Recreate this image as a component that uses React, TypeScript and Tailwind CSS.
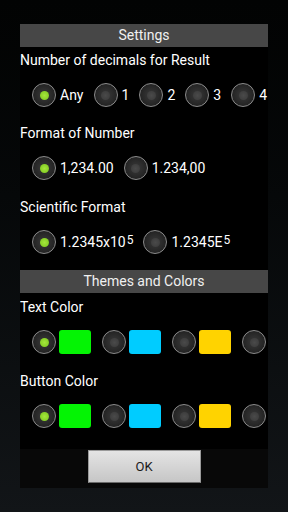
import React, { FC, ReactNode } from "react";

const font = { fontFamily: "Roboto, 'Noto Sans', sans-serif" };

// radio circle like the old android holo-dark one
const Radio: FC<{ on?: boolean }> = ({ on }) => (
    <div className="w-[24px] h-[24px] shrink-0 rounded-full border-[1.5px] border-[#8c8c8c] bg-[radial-gradient(circle,#3a3a3a_0%,#282828_55%,#1a1a1a_100%)] flex items-center justify-center">
        {on ? (
            <div className="w-[9px] h-[9px] rounded-full bg-[radial-gradient(circle,#a6e63c_0%,#86cf26_70%,#5f9a18_100%)]" />
        ) : (
            <div className="w-[9px] h-[9px] rounded-full bg-[radial-gradient(circle,#4a4a4a_0%,#3e3e3e_70%,#2c2c2c_100%)]" />
        )}
    </div>
);

const Header: FC<{ title: string }> = ({ title }) => (
    <div className="h-[23px] bg-[#474747] text-[#f0f0f0] text-[14px] leading-[23px] text-center">{title}</div>
);

// pt is the space above the label
const Label: FC<{ text: string; pt: string }> = ({ text, pt }) => (
    <div className={`${pt} text-[14px] leading-[20px] text-white whitespace-nowrap`}>{text}</div>
);

const Row: FC<{ children: ReactNode }> = ({ children }) => (
    <div className="h-[50px] flex items-center pl-[12px] gap-[10px] whitespace-nowrap overflow-hidden">{children}</div>
);

const Option: FC<{ on?: boolean; children: ReactNode }> = ({ on, children }) => (
    <div className="flex items-center gap-[4px] text-white text-[14px] shrink-0">
        <Radio on={on} />
        <span>{children}</span>
    </div>
);

const Swatch: FC<{ on?: boolean; color: string }> = ({ on, color }) => (
    <div className="flex items-center gap-[3px] shrink-0 mr-[1px]">
        <Radio on={on} />
        <div className={`w-[32px] h-[24px] rounded-[3px] ${color}`} />
    </div>
);

const ColorRow: FC = () => (
    <Row>
        <Swatch on color="bg-[#04f404]" />
        <Swatch color="bg-[#00ccff]" />
        <Swatch color="bg-[#ffd300]" />
        <Radio />
    </Row>
);

const App: FC = () => {
    return (
        <div
            className="w-[288px] h-[512px] overflow-hidden bg-gradient-to-b from-[#020303] to-[#121518] flex flex-col items-center pt-[24px]"
            style={font}
        >
            <div className="w-[248px] h-[464px] flex flex-col bg-black">
                {/* scrolling content */}
                <div className="h-[425px] overflow-hidden">
                    <Header title="Settings" />
                    <Label pt="pt-[3px]" text="Number of decimals for Result" />
                    <Row>
                        <Option on>Any</Option>
                        <Option>1</Option>
                        <Option>2</Option>
                        <Option>3</Option>
                        <Option>4</Option>
                    </Row>
                    <Label pt="pt-[3px]" text="Format of Number" />
                    <Row>
                        <Option on>1,234.00</Option>
                        <Option>1.234,00</Option>
                    </Row>
                    <Label pt="pt-[4px]" text="Scientific Format" />
                    <Row>
                        <Option on>
                            1.2345x10<sup className="text-[12px] ml-[1px] relative -top-[3px]">5</sup>
                        </Option>
                        <Option>
                            1.2345E<sup className="text-[12px] ml-[1px] relative -top-[3px]">5</sup>
                        </Option>
                    </Row>
                    <div className="h-[3px]" />
                    <Header title="Themes and Colors" />
                    <Label pt="pt-[4px]" text="Text Color" />
                    <ColorRow />
                    <Label pt="pt-[4px]" text="Button Color" />
                    <ColorRow />
                </div>

                {/* button bar */}
                <div className="flex-1 bg-[#080808] flex justify-center pt-[1px]">
                    <button className="w-[113px] h-[33px] bg-gradient-to-b from-[#e4e4e4] to-[#c6c6c6] border border-[#9a9a9a] border-b-[#6a6a6a] text-[#1a1a1a] text-[13px]">
                        OK
                    </button>
                </div>
            </div>
        </div>
    );
};

export default App;
